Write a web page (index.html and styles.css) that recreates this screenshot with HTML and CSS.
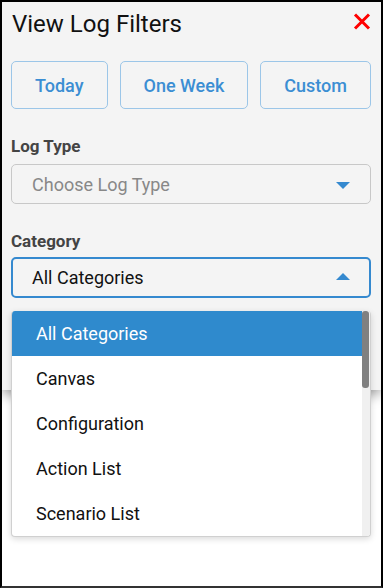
FILE: index.html
```html
<!DOCTYPE html>
<html>
<head>
    <title>View Log Filters</title>
    <link rel="stylesheet" href="styles.css">
</head>
<body>
    <div class="frame">
        <div class="panel">
            <div class="header">
                <h1>View Log Filters</h1>
                <span class="close">
                    <svg width="18" height="17" viewBox="0 0 18 17">
                        <path d="M2 1.5 L16 15.5 M16 1.5 L2 15.5" stroke="#ff0000" stroke-width="3" fill="none"/>
                    </svg>
                </span>
            </div>

            <div class="ranges">
                <button class="range">Today</button>
                <button class="range">One Week</button>
                <button class="range">Custom</button>
            </div>

            <div class="field">
                <div class="label">Log Type</div>
                <div class="select">
                    <span class="placeholder">Choose Log Type</span>
                    <span class="caret down"></span>
                </div>
            </div>

            <div class="field category">
                <div class="label">Category</div>
                <div class="select open">
                    <span>All Categories</span>
                    <span class="caret up"></span>
                </div>
            </div>
        </div>

        <div class="menu">
            <ul class="options">
                <li class="selected">All Categories</li>
                <li>Canvas</li>
                <li>Configuration</li>
                <li>Action List</li>
                <li>Scenario List</li>
            </ul>
            <div class="track"><div class="thumb"></div></div>
        </div>
    </div>
</body>
</html>
```

FILE: styles.css
```css
body {
    margin: 0;
    font-family: Roboto, "Liberation Sans", sans-serif;
}
.frame {
    position: relative;
    width: 383px;
    height: 588px;
    box-sizing: border-box;
    border: 2px solid #000;
    border-bottom-color: #333;
    background-color: #fff;
    overflow: hidden;
}
.panel {
    height: 388px;
    box-sizing: border-box;
    padding: 0 10px 0 9px;
    background-color: #f4f4f4;
    box-shadow: 0 4px 12px rgba(0,0,0,0.4);
}
.header {
    display: flex;
    justify-content: space-between;
    padding-top: 8px;
}
.header h1 {
    margin: 0 0 0 1px;
    font-size: 24px;
    font-weight: 400;
    line-height: 28px;
    color: #111;
}
.close {
    margin-top: 3px;
    height: 17px;
}
.ranges {
    display: flex;
    justify-content: space-between;
    margin-top: 23px;
}
.range {
    height: 48px;
    padding: 0 23px;
    border: 1px solid #9cc6e8;
    border-radius: 5px;
    background-color: #f4f4f4;
    font-family: Roboto, "Liberation Sans", sans-serif;
    font-size: 18px;
    font-weight: 500;
    color: #3b8ed3;
}
.field {
    margin-top: 27px;
}
.label {
    font-size: 17px;
    font-weight: 700;
    line-height: 20px;
    color: #444;
    margin-bottom: 8px;
}
.select {
    display: flex;
    align-items: center;
    justify-content: space-between;
    height: 40px;
    box-sizing: border-box;
    padding: 0 20px 0 20px;
    border: 1px solid #c8c8c8;
    border-radius: 5px;
    font-size: 18px;
    color: #111;
}
.placeholder {
    color: #888;
}
.category .label {
    margin-bottom: 6px;
}
.select.open {
    height: 41px;
    border: 2px solid #3589cf;
    padding: 0 19px 0 19px;
}
.caret {
    width: 0;
    height: 0;
    border-left: 7.5px solid transparent;
    border-right: 7.5px solid transparent;
}
.caret.down {
    border-top: 7px solid #3589cf;
    margin-top: 3px;
}
.caret.up {
    border-bottom: 7px solid #3589cf;
    margin-top: -2px;
}
.menu {
    position: absolute;
    top: 309px;
    left: 9px;
    right: 10px;
    display: flex;
    border: 1px solid #d0d0d0;
    border-top: none;
    border-radius: 4px;
    background-color: #fff;
    box-shadow: 0 2px 6px rgba(0,0,0,0.15);
    overflow: hidden;
}
.options {
    flex: 1;
    margin: 0;
    padding: 0;
    list-style: none;
}
.options li {
    height: 45px;
    line-height: 45px;
    padding-left: 24px;
    font-size: 18px;
    color: #111;
}
.options li.selected {
    background-color: #2f8acd;
    color: #fff;
}
.track {
    width: 8px;
    background-color: #f0f0f0;
}
.thumb {
    width: 7px;
    height: 77px;
    border-radius: 3px;
    background-color: #808080;
}
```
